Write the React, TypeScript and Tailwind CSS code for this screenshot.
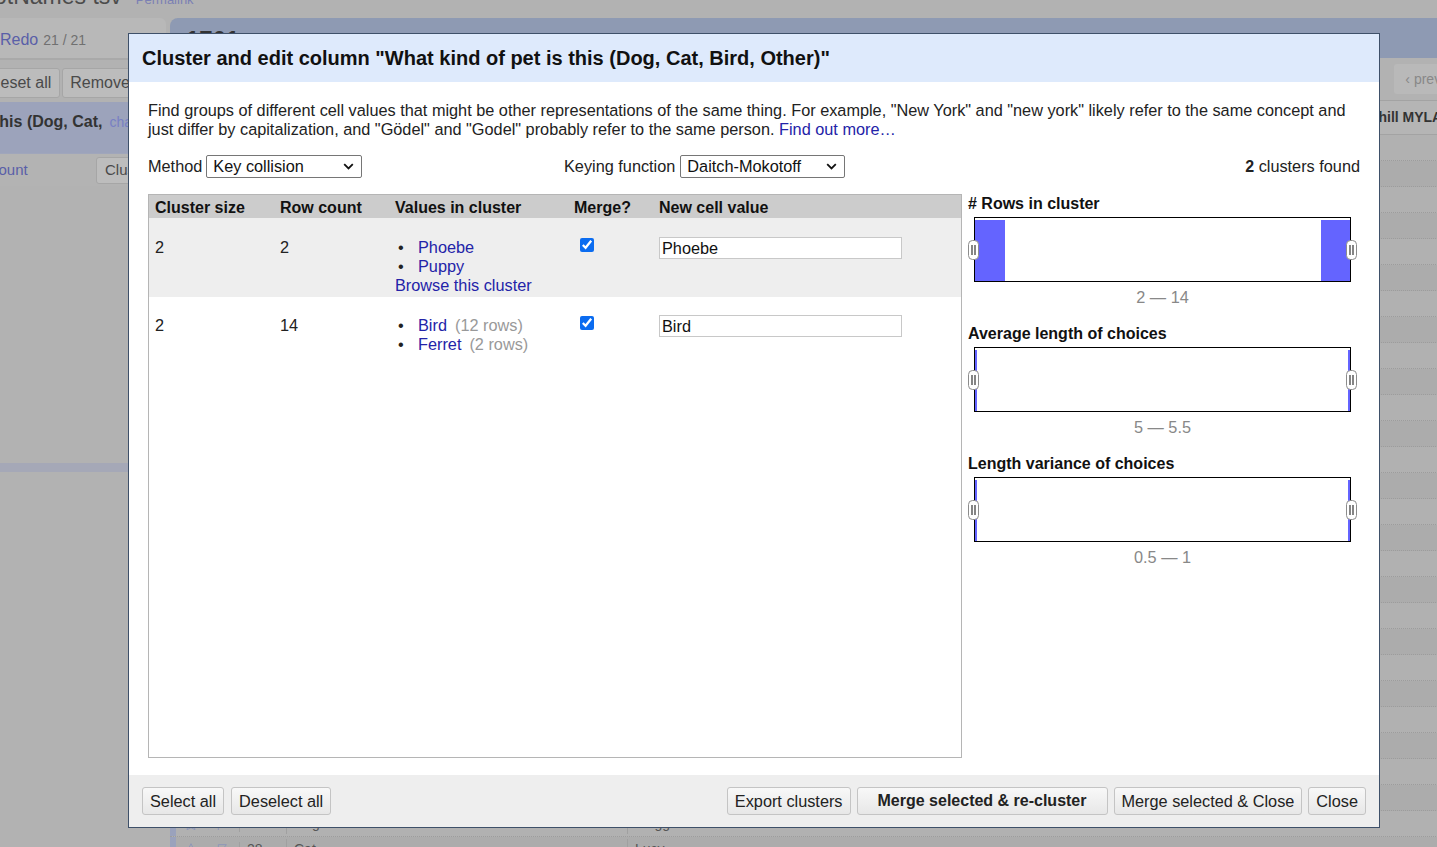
import { ReactNode } from "react"

function Btn({ children, bold, className = "" }: { children: ReactNode; bold?: boolean; className?: string }) {
  return (
    <button
      className={`h-[28px] rounded-[3px] border border-[#c4c4c4] bg-linear-to-b from-[#f8f8f8] to-[#e7e7e7] leading-[26px] text-[#222] ${
        bold ? "text-[16px] font-bold px-[20px]" : "text-[16.3px] px-[7px]"
      } ${className}`}
    >
      {children}
    </button>
  )
}

function FakeSelect({ value, width }: { value: string; width: string }) {
  return (
    <div className={`flex h-[23px] items-center justify-between rounded-[2px] border border-[#767676] bg-white pl-[6px] pr-[7px] ${width}`}>
      <span className="leading-[21px] text-[#111]">{value}</span>
      <svg width="11" height="7" viewBox="0 0 11 7">
        <path d="M1.2 1.2 L5.5 5.5 L9.8 1.2" fill="none" stroke="#111" strokeWidth="1.8" />
      </svg>
    </div>
  )
}

function Handle({ side }: { side: "l" | "r" }) {
  return (
    <svg
      className={`absolute top-1/2 -translate-y-1/2 ${side === "l" ? "left-[-7px]" : "right-[-7px]"}`}
      width="11"
      height="20"
      viewBox="0 0 11 20"
    >
      <rect x="0.5" y="0.5" width="10" height="19" rx="4" fill="#fff" stroke="#8c8c8c" />
      <line x1="4" y1="5" x2="4" y2="15" stroke="#333" strokeWidth="1.2" />
      <line x1="7" y1="5" x2="7" y2="15" stroke="#333" strokeWidth="1.2" />
    </svg>
  )
}

function Chart({ title, range, wide }: { title: string; range: string; wide?: boolean }) {
  return (
    <div className="mb-[17px]">
      <div className="h-[19px] text-[16px] font-bold leading-[19px] text-[#111]">{title}</div>
      <div className="relative ml-[6px] mt-[4px] h-[65px] w-[377px] border border-black bg-white">
        <div className={`absolute bottom-0 left-0 top-[2px] bg-[#6464ff] ${wide ? "w-[30px]" : "w-[2px]"}`} />
        <div className={`absolute bottom-0 right-0 top-[2px] bg-[#6464ff] ${wide ? "w-[29px]" : "w-[2px]"}`} />
        <Handle side="l" />
        <Handle side="r" />
      </div>
      <div className="ml-[6px] mt-[6px] w-[377px] text-center leading-[19px] text-[#888]">{range}</div>
    </div>
  )
}

const rows = [
  ["1", "Dog", "Bella"], ["2", "Cat", "Oliver"], ["3", "Dog", "Max"], ["4", "Bird", "Kiwi"],
  ["5", "Cat", "Luna"], ["6", "Dog", "Charlie"], ["7", "Cat", "Milo"], ["8", "Dog", "Cooper"],
  ["9", "Other", "Phoebe"], ["10", "Cat", "Simba"], ["11", "Dog", "Buddy"], ["12", "Cat", "Chloe"],
  ["13", "Dog", "Rocky"], ["14", "Bird", "Sunny"], ["15", "Cat", "Nala"], ["16", "Dog", "Duke"],
  ["17", "Cat", "Leo"], ["18", "Dog", "Bear"], ["19", "Cat", "Lily"], ["20", "Dog", "Zeus"],
  ["21", "Cat", "Coco"], ["22", "Dog", "Tucker"], ["23", "Cat", "Kitty"], ["24", "Dog", "Jack"],
  ["25", "Cat", "Gizmo"], ["26", "Dog", "Toby"], ["27", "Dog", "Maggie"], ["28", "Cat", "Lucy"],
]

function Star() {
  return (
    <svg width="16" height="16" viewBox="0 0 24 24" fill="none" stroke="#8f97b8" strokeWidth="1.5">
      <path d="M12 2.5l2.9 6 6.6.9-4.8 4.6 1.2 6.5L12 17.4 6.1 20.5l1.2-6.5L2.5 9.4l6.6-.9z" />
    </svg>
  )
}

function Flag() {
  return (
    <svg width="16" height="16" viewBox="0 0 24 24" fill="none" stroke="#8f97b8" strokeWidth="1.5">
      <path d="M5 21V4M5 4h12l-3 4 3 4H5" />
    </svg>
  )
}

export default function App() {
  return (
    <div className="relative h-[847px] w-[1437px] overflow-hidden bg-[#b2b2b2] font-['Liberation_Sans',Arial,sans-serif]">
      {/* dimmed page behind the dialog */}
      <div className="h-[18px] overflow-hidden">
        <div className="-mt-[18px] flex items-baseline gap-[14px] whitespace-nowrap">
          <span className="-ml-[6px] text-[23px] leading-[28px] text-[#4c4c4c]">otNames tsv</span>
          <span className="text-[13px] text-[#7b80b4]">Permalink</span>
        </div>
      </div>
      <div className="flex">
        <div className="w-[166px] shrink-0">
          <div className="flex h-[42px] items-center justify-between rounded-tr-[6px] border-b-2 border-[#a9a9a9] bg-[#b8b8b8] pt-[3px]">
            <div className="flex items-baseline gap-[5px] whitespace-nowrap">
              <span className="text-[16px] text-[#5a5fa8]">Redo</span>
              <span className="text-[14px] text-[#707070]">21 / 21</span>
            </div>
            <div className="mr-[3px] h-[14px] w-[18px] rounded-[2px] bg-[#c4c4c4]" />
          </div>
          <div className="mt-[8px] flex h-[30px] gap-[2px] overflow-hidden">
            <div className="-ml-[20px] flex items-center rounded-[3px] border border-[#a6a6a6] bg-[#bcbcbc] px-[8px] text-[16px] text-[#4a4a4a] whitespace-nowrap">
              Reset all
            </div>
            <div className="flex items-center rounded-[3px] border border-[#a6a6a6] bg-[#bcbcbc] px-[7px] text-[16px] text-[#4a4a4a] whitespace-nowrap">
              Remove all
            </div>
          </div>
          <div className="mt-[4px] h-[51px] overflow-hidden bg-[#9ca3bb] pt-[8px]">
            <div className="flex items-baseline gap-[7px] whitespace-nowrap">
              <span className="-ml-[6px] text-[16px] font-bold text-[#333]">this (Dog, Cat,</span>
              <span className="text-[14px] text-[#7880c4]">change</span>
            </div>
          </div>
          <div className="flex h-[33px] items-center justify-between border-t border-[#a0a6bb] bg-[#b3b3b3]">
            <span className="-ml-[9px] text-[15px] text-[#5a5fa8]">count</span>
            <div className="flex h-[27px] items-center rounded-[3px] border border-[#a6a6a6] bg-[#bdbdbd] pl-[8px] pr-[30px] text-[15px] text-[#4a4a4a]">
              Clus
            </div>
          </div>
          <div className="h-[277px]" />
          <div className="h-[9px] bg-[#a5a8b7]" />
        </div>
        <div className="ml-[4px] flex-1">
          <div className="h-[40px] rounded-tl-[8px] bg-[#8e9ab3] pl-[16px] pt-[4px]">
            <span className="text-[24px] font-bold text-[#333]">1701 rows</span>
          </div>
          <div className="flex h-[42px] items-center justify-end">
            <div className="flex h-[30px] w-[58px] items-center rounded-l-[3px] bg-[#b9b9b9] pl-[11px] text-[14px] text-[#888] whitespace-nowrap">
              ‹ prev
            </div>
          </div>
          <div className="flex h-[35px] items-center border-y border-[#a3a3a3] bg-[#b5b5b5] text-[14px] font-bold text-[#333]">
            <div className="w-[1168px]" />
            <span className="whitespace-nowrap">Churchill MYLAR</span>
          </div>
          {rows.map((r, i) => (
            <div
              key={r[0]}
              className={`flex h-[26px] items-center border-b border-dotted border-[#9c9c9c] text-[14px] text-[#555] ${
                i % 2 ? "bg-[#acacac]" : "bg-[#b1b1b1]"
              }`}
            >
              <div className="h-full w-[6px] bg-[#9aa2bc]" />
              <div className="flex w-[30px] justify-center"><Star /></div>
              <div className="flex w-[34px] justify-center border-r border-[#a0a0a0]"><Flag /></div>
              <div className="w-[47px] border-r border-[#a0a0a0] pl-[7px]">{r[0]}</div>
              <div className="w-[341px] border-r border-[#a0a0a0] pl-[7px]">{r[1]}</div>
              <div className="pl-[7px]">{r[2]}</div>
            </div>
          ))}
        </div>
      </div>

      {/* dialog */}
      <div className="absolute left-[128px] top-[33px] flex h-[795px] w-[1252px] flex-col border border-[#3e5069] bg-white text-[16.3px] text-[#222]">
        <div className="flex h-[48px] shrink-0 items-center bg-[#deeafc] pl-[13px]">
          <h1 className="text-[20px] font-bold text-[#111]">
            Cluster and edit column "What kind of pet is this (Dog, Cat, Bird, Other)"
          </h1>
        </div>
        <div className="flex-1 px-[19px] pt-[19px]">
          <p className="leading-[19px]">
            Find groups of different cell values that might be other representations of the same thing. For example, "New York" and "new york" likely refer to the same concept and just differ by capitalization, and "Gödel" and "Godel" probably refer to the same person.{" "}
            <span className="text-[#2323a8]">Find out more…</span>
          </p>
          <div className="mt-[16px] flex h-[23px] items-center">
            <div className="flex w-[416px] items-center gap-[4px]">
              <span>Method</span>
              <FakeSelect value="Key collision" width="w-[156px]" />
            </div>
            <div className="flex items-center gap-[5px]">
              <span>Keying function</span>
              <FakeSelect value="Daitch-Mokotoff" width="w-[165px]" />
            </div>
            <div className="ml-auto">
              <b className="text-[16px]">2</b> clusters found
            </div>
          </div>
          <div className="mt-[16px] flex gap-[6px]">
            <div className="h-[564px] w-[814px] border border-[#b5b5b5] leading-[19px]">
              <div className="grid h-[23px] grid-cols-[125px_115px_179px_85px_1fr] items-center bg-[#cccccc] pt-[1px] text-[16px] font-bold text-[#111]">
                <div className="pl-[6px]">Cluster size</div>
                <div className="pl-[6px]">Row count</div>
                <div className="pl-[6px]">Values in cluster</div>
                <div className="pl-[6px]">Merge?</div>
                <div className="pl-[6px]">New cell value</div>
              </div>
              <div className="grid h-[79px] grid-cols-[125px_115px_179px_85px_1fr] bg-[#eeeeee] pt-[20px]">
                <div className="pl-[6px]">2</div>
                <div className="pl-[6px]">2</div>
                <div className="pl-[6px]">
                  <div className="flex"><span className="w-[23px] pl-[3px]">•</span><span className="text-[#2323a8]">Phoebe</span></div>
                  <div className="flex"><span className="w-[23px] pl-[3px]">•</span><span className="text-[#2323a8]">Puppy</span></div>
                  <div className="text-[#2323a8]">Browse this cluster</div>
                </div>
                <div className="-mt-[1px] pl-[12px]">
                  <input type="checkbox" defaultChecked className="m-0 h-[14px] w-[14px] accent-[#0b6cf0]" />
                </div>
                <div className="pl-[6px]">
                  <input
                    defaultValue="Phoebe"
                    className="-mt-[1px] h-[22px] w-[243px] border border-[#c8c8c8] bg-white px-[2px] text-[16.3px] text-[#111] outline-none"
                  />
                </div>
              </div>
              <div className="grid grid-cols-[125px_115px_179px_85px_1fr] pt-[19px]">
                <div className="pl-[6px]">2</div>
                <div className="pl-[6px]">14</div>
                <div className="pl-[6px]">
                  <div className="flex"><span className="w-[23px] pl-[3px]">•</span><span className="text-[#2323a8]">Bird</span><span className="ml-[8px] text-[#999]">(12 rows)</span></div>
                  <div className="flex"><span className="w-[23px] pl-[3px]">•</span><span className="text-[#2323a8]">Ferret</span><span className="ml-[8px] text-[#999]">(2 rows)</span></div>
                </div>
                <div className="-mt-[1px] pl-[12px]">
                  <input type="checkbox" defaultChecked className="m-0 h-[14px] w-[14px] accent-[#0b6cf0]" />
                </div>
                <div className="pl-[6px]">
                  <input
                    defaultValue="Bird"
                    className="-mt-[1px] h-[22px] w-[243px] border border-[#c8c8c8] bg-white px-[2px] text-[16.3px] text-[#111] outline-none"
                  />
                </div>
              </div>
            </div>
            <div className="w-[392px]">
              <Chart title="# Rows in cluster" range="2 — 14" wide />
              <Chart title="Average length of choices" range="5 — 5.5" />
              <Chart title="Length variance of choices" range="0.5 — 1" />
            </div>
          </div>
        </div>
        <div className="flex h-[52px] shrink-0 items-start bg-[#eeeeee] px-[13px] pt-[12px]">
          <div className="flex gap-[7px]">
            <Btn>Select all</Btn>
            <Btn>Deselect all</Btn>
          </div>
          <div className="ml-auto flex gap-[6px]">
            <Btn>Export clusters</Btn>
            <Btn bold>Merge selected &amp; re-cluster</Btn>
            <Btn>Merge selected &amp; Close</Btn>
            <Btn>Close</Btn>
          </div>
        </div>
      </div>
    </div>
  )
}
